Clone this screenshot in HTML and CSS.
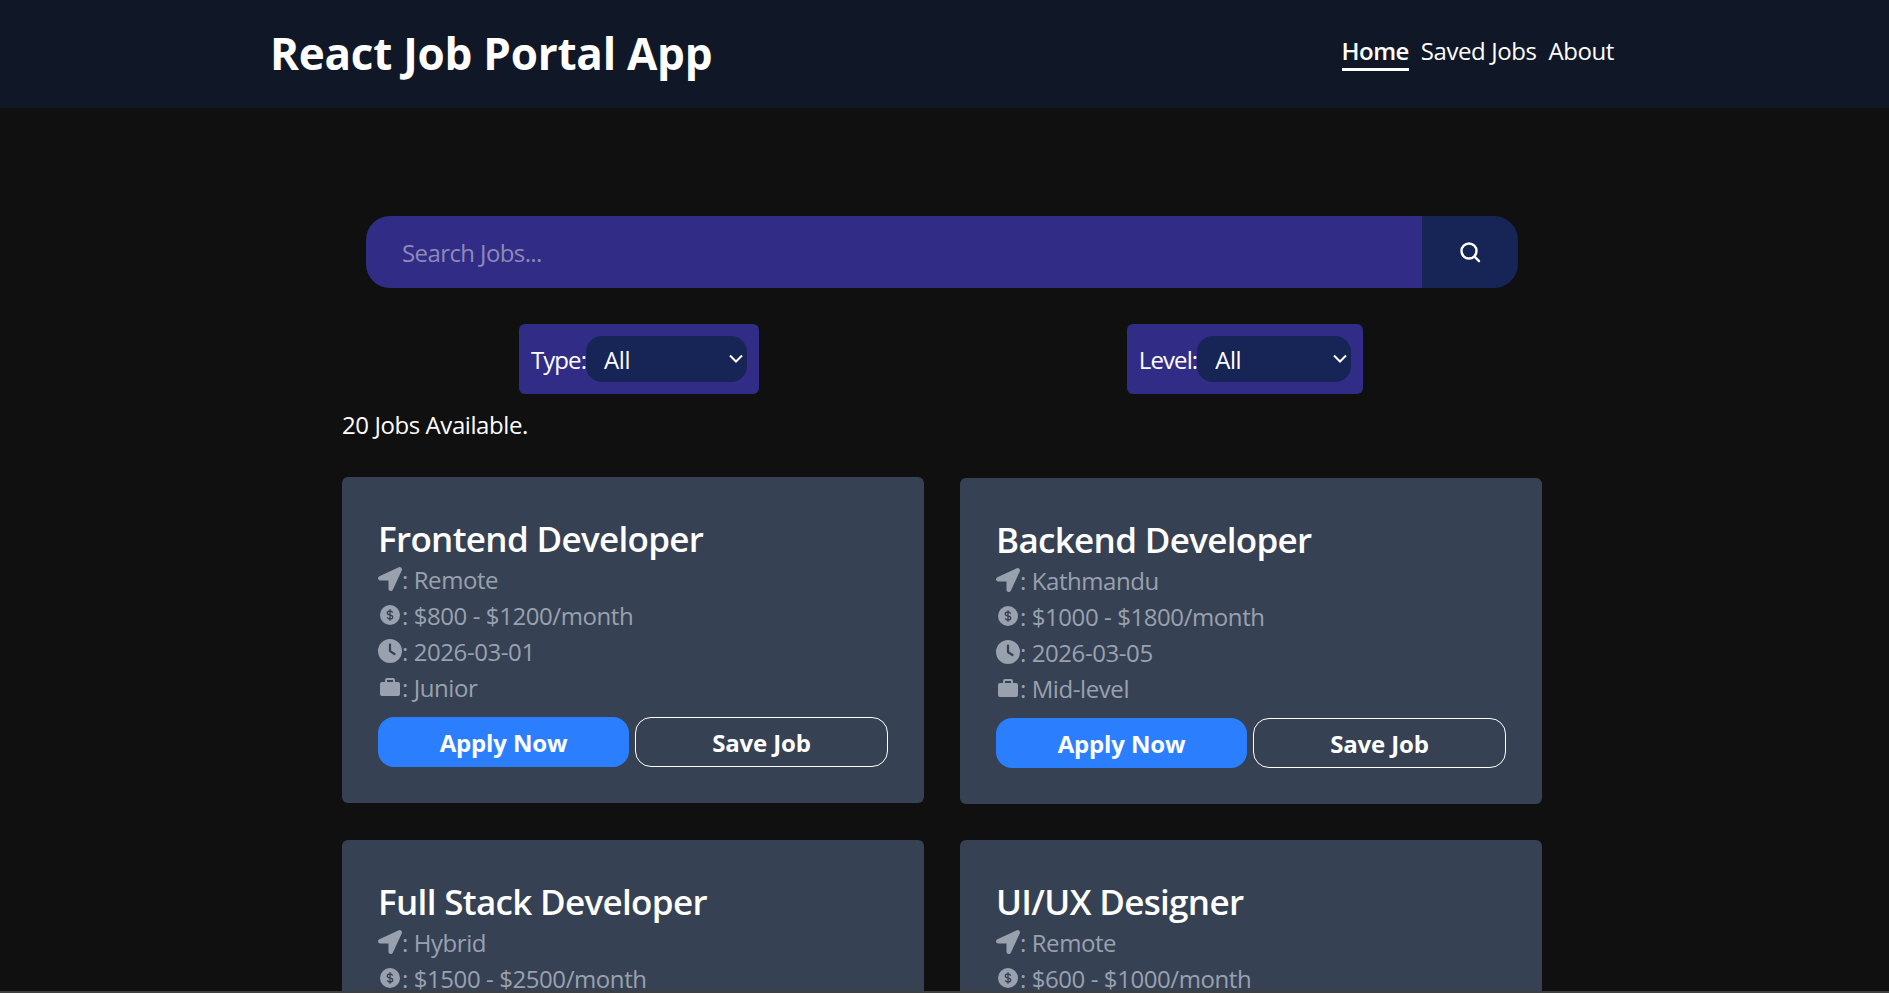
FILE: index.html
```html
<!DOCTYPE html>
<html lang="en">
<head>
<meta charset="utf-8">
<title>React Job Portal App</title>
<link rel="stylesheet" href="styles.css">
</head>
<body>
<svg class="defs" width="0" height="0" aria-hidden="true">
  <symbol id="i-arrow" viewBox="0 0 512 512"><path d="M444.52 3.52L28.74 195.42c-47.97 22.39-31.98 92.75 19.19 92.75h175.91v175.91c0 51.17 70.36 67.17 92.75 19.19l191.9-415.78c15.99-38.39-25.59-79.97-63.97-63.97z"/></symbol>
  <symbol id="i-dollar" viewBox="0 0 24 24"><circle cx="12" cy="12" r="10"/><path class="ic-cut" d="M14.6 9.6c-.5-1-1.4-1.6-2.6-1.6-1.5 0-2.7.8-2.7 2s1 1.7 2.7 2 2.7.9 2.7 2-1.2 2-2.7 2c-1.2 0-2.2-.6-2.7-1.6M12 6.2v11.6"/></symbol>
  <symbol id="i-clock" viewBox="0 0 512 512"><path d="M256 0a256 256 0 1 1 0 512A256 256 0 1 1 256 0zM232 120V256c0 8 4 15.5 10.7 20l96 64c11 7.4 25.9 4.4 33.3-6.7s4.4-25.9-6.7-33.3L280 243.2V120c0-13.3-10.7-24-24-24s-24 10.7-24 24z"/></symbol>
  <symbol id="i-case" viewBox="0 0 24 24"><path fill-rule="evenodd" d="M9 3h6a2 2 0 0 1 2 2v2h3a2 2 0 0 1 2 2v10a2 2 0 0 1-2 2H4a2 2 0 0 1-2-2V9a2 2 0 0 1 2-2h3V5a2 2 0 0 1 2-2zm0 2v2h6V5H9z"/></symbol>
</svg>
<header class="topbar">
  <h1 class="brand">React Job Portal App</h1>
  <nav class="nav">
    <a class="nav-link nav-active">Home</a>
    <a class="nav-link">Saved Jobs</a>
    <a class="nav-link">About</a>
  </nav>
</header>
<main class="main">
  <form class="search">
    <input class="search-input" type="text" placeholder="Search Jobs...">
    <button class="search-btn" type="button" aria-label="Search">
      <svg width="24" height="24" viewBox="0 0 24 24" fill="none" stroke="#fff" stroke-width="2.4" stroke-linecap="round"><circle cx="11" cy="11" r="7.5"/><path d="M16.8 16.8 21 21.2"/></svg>
    </button>
  </form>
  <div class="filters">
    <div class="filter"><label class="filter-label">Type:</label><div class="select select-type"><span class="select-value">All</span><svg class="chev" width="14" height="14" viewBox="0 0 14 14" fill="none" stroke="#fff" stroke-width="2"><path d="M1 3.5l6 6 6-6"/></svg></div></div>
    <div class="filter"><label class="filter-label">Level:</label><div class="select select-level"><span class="select-value">All</span><svg class="chev" width="14" height="14" viewBox="0 0 14 14" fill="none" stroke="#fff" stroke-width="2"><path d="M1 3.5l6 6 6-6"/></svg></div></div>
  </div>
  <p class="count">20 Jobs Available.</p>
  <section class="grid">
    <article class="card card-lifted">
      <h2 class="title">Frontend Developer</h2>
      <div class="row"><svg class="ic"><use href="#i-arrow"/></svg>: Remote</div>
      <div class="row"><svg class="ic"><use href="#i-dollar"/></svg>: $800 - $1200/month</div>
      <div class="row"><svg class="ic"><use href="#i-clock"/></svg>: 2026-03-01</div>
      <div class="row"><svg class="ic"><use href="#i-case"/></svg>: Junior</div>
      <div class="actions"><button class="btn btn-apply">Apply Now</button><button class="btn btn-save">Save Job</button></div>
    </article>
    <article class="card">
      <h2 class="title">Backend Developer</h2>
      <div class="row"><svg class="ic"><use href="#i-arrow"/></svg>: Kathmandu</div>
      <div class="row"><svg class="ic"><use href="#i-dollar"/></svg>: $1000 - $1800/month</div>
      <div class="row"><svg class="ic"><use href="#i-clock"/></svg>: 2026-03-05</div>
      <div class="row"><svg class="ic"><use href="#i-case"/></svg>: Mid-level</div>
      <div class="actions"><button class="btn btn-apply">Apply Now</button><button class="btn btn-save">Save Job</button></div>
    </article>
    <article class="card">
      <h2 class="title">Full Stack Developer</h2>
      <div class="row"><svg class="ic"><use href="#i-arrow"/></svg>: Hybrid</div>
      <div class="row"><svg class="ic"><use href="#i-dollar"/></svg>: $1500 - $2500/month</div>
    </article>
    <article class="card">
      <h2 class="title">UI/UX Designer</h2>
      <div class="row"><svg class="ic"><use href="#i-arrow"/></svg>: Remote</div>
      <div class="row"><svg class="ic"><use href="#i-dollar"/></svg>: $600 - $1000/month</div>
    </article>
  </section>
</main>
<div class="window-edge"></div>
</body>
</html>
```
FILE: styles.css
```css
* { box-sizing: border-box; }
html, body { margin: 0; height: 100%; overflow: hidden; }
body {
  background: #101010;
  color: #fff;
  font-family: "Open Sans", "Noto Sans", sans-serif;
  font-size: 24px;
  line-height: 36px;
  letter-spacing: -0.42px;
}
.defs { position: absolute; }
.window-edge { position: fixed; left: 0; right: 0; bottom: 0; height: 2px; background: #3f3f3f; }
.topbar {
  height: 108px;
  background: #101828;
  display: flex;
  align-items: center;
  justify-content: space-between;
  padding: 0 275px 0 270px;
}
.brand { margin: -2px 0 0; font-size: 44px; font-weight: 700; line-height: 60px; letter-spacing: -0.25px; }
.nav { display: flex; gap: 12px; margin-top: -3px; }
.nav-link { display: block; line-height: 34px; border-bottom: 3px solid transparent; }
.nav-active { font-weight: 600; letter-spacing: -0.55px; border-bottom-color: #fff; }
.main { width: 1884px; padding: 108px 342px 0; }
.search {
  display: flex;
  height: 72px;
  margin: 0 24px;
  border-radius: 24px;
  overflow: hidden;
}
.search-input {
  flex: 1;
  min-width: 0;
  border: 0;
  padding: 2px 36px 0;
  background: #312c85;
  color: #fff;
  font: inherit;
  letter-spacing: -0.6px;
  outline: 0;
}
.search-input::placeholder { color: #8e8ab8; opacity: 1; }
.search-btn {
  width: 96px;
  border: 0;
  padding: 0;
  background: #162456;
  display: flex;
  align-items: center;
  justify-content: center;
}
.filters { display: grid; grid-template-columns: repeat(2, 1fr); column-gap: 12px; margin-top: 36px; justify-items: center; }
.filter {
  height: 70px;
  padding: 0 12px;
  background: #312c85;
  border-radius: 6px;
  display: flex;
  align-items: center;
}
.filter-label { padding-top: 2px; letter-spacing: -0.9px; }
.select-value { padding-top: 2px; }
.select {
  height: 46px;
  border-radius: 16px;
  background: #162456;
  display: flex;
  align-items: center;
  justify-content: space-between;
  padding: 0 4px 0 18px;
}
.select-type { width: 161px; }
.select-level { width: 154px; }
.count { margin: 13px 0 0; line-height: 36px; }
.grid { display: grid; grid-template-columns: 582px 582px; column-gap: 36px; row-gap: 36px; margin-top: 35px; }
.card {
  min-height: 326px;
  padding: 38px 36px 36px;
  background: #364153;
  border-radius: 6px;
}
.card-lifted { transform: translateY(-1px); }
.title { margin: 0; font-size: 35px; font-weight: 600; line-height: 47px; letter-spacing: -0.67px; }
.row { color: #99a1af; height: 36px; line-height: 36px; display: flex; align-items: center; white-space: pre; }
.ic { width: 24px; height: 24px; fill: #99a1af; margin-top: -2px; }
.ic-cut { fill: none; stroke: #364153; stroke-width: 1.3; }
.actions { display: flex; gap: 6px; margin-top: 11px; }
.btn {
  flex: 1;
  height: 50px;
  padding: 2px 0 0;
  border-radius: 16px;
  color: #fff;
  font: inherit;
  font-weight: 700;
  letter-spacing: -0.15px;
}
.btn-apply { border: 0; background: #2b7fff; }
.btn-save { border: 1px solid #fff; background: transparent; }
```
